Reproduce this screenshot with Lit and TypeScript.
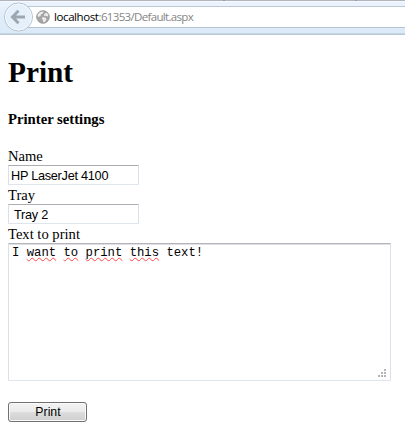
import { LitElement, html, css } from "lit";
import { customElement } from "lit/decorators.js";

@customElement("browser-bar")
class BrowserBar extends LitElement {
  static styles = css`
    :host { display: block; }
    .bar {
      display: flex; align-items: flex-start; box-sizing: border-box; height: 35px;
      border-bottom: 1px solid #bac9d8;
      background:
        linear-gradient(90deg, #b1b5bb 223px, #9297b5 223px 225px, #b1b5bb 225px 355px, #9297b5 355px 357px, #b1b5bb 357px) 0 0 / 100% 1px no-repeat,
        linear-gradient(#f6faff 0 2px, #eaf2fd 2px 6px, #e2eefa 12px, #dceaf7 33px, #c5d5e4 33px);
    }
    .back { flex: none; width: 30px; height: 30px; margin: 2px 0 0 4px; position: relative; z-index: 1; }
    .address {
      flex: 1; display: flex; align-items: center; box-sizing: border-box; height: 22px;
      margin: 6px 0 0 -8px; padding-left: 10px; background: #fff;
      border-top: 1px solid #bdc9d6; border-bottom: 1px solid #b4c4d2;
    }
    .globe { flex: none; width: 14px; height: 14px; margin-right: 4px; }
    .url { font: 11.5px/20px "Open Sans", "Noto Sans", sans-serif; letter-spacing: -0.67px; color: #858585; white-space: nowrap; }
    .host { color: #000; letter-spacing: -0.4px; }
    svg { display: block; }
  `;
  render() {
    return html`<div class="bar">
      <svg class="back" viewBox="0 0 30 30">
        <circle cx="14.5" cy="15" r="14" fill="#e6f0fa" stroke="#b4c2d0" stroke-width="1"/>
        <circle cx="14.5" cy="15" r="13" fill="none" stroke="#f5faff" stroke-width=".8"/>
        <path d="M14.5 8.7 8.5 15l6 6.3M9 15h12" fill="none" stroke="#9ca7b2" stroke-width="3"/>
      </svg>
      <div class="address">
        <svg class="globe" viewBox="0 0 14 14">
          <circle cx="7" cy="7" r="6.5" fill="#a5a5a5"/>
          <path d="M3 2.8 6 1.4 7.8 2 6.4 3.8 5 4.3 4.6 6 2.4 7 1.3 5.5ZM8.3 4.1l2.5-1.4 1.6 2-.6 1.7-2-.7-1.8.3ZM6.8 7.1l2.9.6.8 1.5-1.6 2.9-1.5.4-.5-2.5-1-1.4Z" fill="#ececec"/>
          <circle cx="7" cy="7" r="6.3" fill="none" stroke="#959595" stroke-width=".7"/>
        </svg>
        <span class="url"><span class="host">localhost</span>:61353/Default.aspx</span>
      </div>
    </div>`;
  }
}

@customElement("app-root")
class AppRoot extends LitElement {
  static styles = css`
    :host { display: block; height: 428px; overflow: hidden; background: #fff; color: #000; font-family: "Liberation Serif", serif; }
    .page { display: flex; flex-direction: column; align-items: flex-start; padding: 0 14px 0 8px; }
    h1 { margin: 20px 0 0; font-size: 29.3px; line-height: 34px; }
    h4 { margin: 21px 0 0; font-size: 14.7px; line-height: 18px; }
    .form { display: flex; flex-direction: column; align-items: flex-start; align-self: stretch; margin-top: 20px; }
    label { font-size: 14.6px; line-height: 17px; height: 17px; }
    input {
      display: block; box-sizing: border-box; margin: 0 0 2px; outline: 0; color: #000; background: #fff;
      border: 1px solid; border-color: #abadb3 #dcdfe8 #dfe5ee #dcdfe8; border-radius: 1px;
      width: 131px; height: 20px; padding: 1px 2px 0; font: 12.7px "Liberation Sans", Arial, sans-serif; letter-spacing: -0.26px;
    }
    .area { position: relative; align-self: stretch; height: 138px; }
    .text {
      box-sizing: border-box; height: 138px; padding: 2px 3px; border: 1px solid; border-radius: 1px;
      border-color: #b4b5ba #dcdfe8 #dfe5ee #dcdfe8; box-shadow: inset 0 1px #dedfe2;
      font: 12.25px/15px "Liberation Mono", monospace; white-space: pre;
    }
    .miss { text-decoration: underline wavy #ff4545 1px; text-underline-offset: 1px; text-decoration-skip-ink: none; }
    .grip { position: absolute; right: 5px; bottom: 4px; width: 8px; height: 8px; }
    button {
      width: 79px; height: 20px; margin: 21px 0 0; padding: 0 0 0 1px; border: 1px solid #707070; border-radius: 3px;
      box-shadow: inset 0 0 0 1px #fafafa; background: linear-gradient(#f2f2f2, #ebebeb 50%, #dddddd 50%, #cfcfcf);
      color: #000; font: 12.3px/18px "Liberation Sans", Arial, sans-serif;
    }
  `;
  render() {
    return html`<browser-bar></browser-bar>
      <main class="page">
        <h1>Print</h1>
        <h4>Printer settings</h4>
        <div class="form">
          <label>Name</label>
          <input .value=${"HP LaserJet 4100"} spellcheck="false">
          <label>Tray</label>
          <input .value=${" Tray 2"} spellcheck="false">
          <label>Text to print</label>
          <div class="area">
            <div class="text" role="textbox">I <span class="miss">want</span> <span class="miss">to</span> <span class="miss">print</span> <span class="miss">this</span> text!</div>
            <svg class="grip" viewBox="0 0 8 8" fill="#b5b5b5">
              <path d="M6 0h2v2H6zM3 3h2v2H3zM6 3h2v2H6zM0 6h2v2H0zM3 6h2v2H3zM6 6h2v2H6z"/>
            </svg>
          </div>
          <button>Print</button>
        </div>
      </main>`;
  }
}
